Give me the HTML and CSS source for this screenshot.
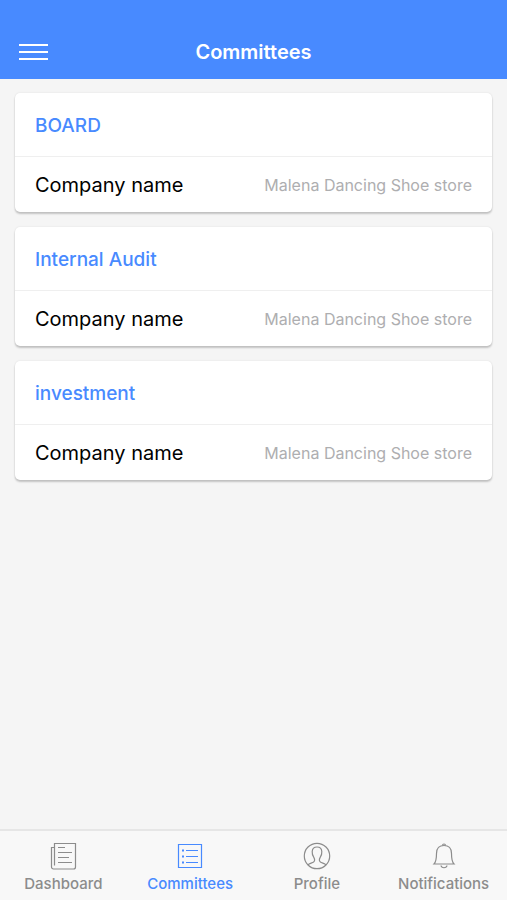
FILE: index.html
```html
<!DOCTYPE html>
<html lang="en">
<head>
    <meta charset="utf-8">
    <meta name="viewport" content="width=device-width, initial-scale=1">
    <title>Committees</title>
    <link rel="stylesheet" href="styles.css">
</head>
<body>
    <header class="toolbar">
        <button class="menu-button" type="button" aria-label="Menu">
            <span></span>
            <span></span>
            <span></span>
        </button>
        <h1>Committees</h1>
    </header>

    <main class="content">
        <section class="card">
            <h2>BOARD</h2>
            <div class="item">
                <span class="label">Company name</span>
                <span class="note">Malena Dancing Shoe store</span>
            </div>
        </section>
        <section class="card">
            <h2>Internal Audit</h2>
            <div class="item">
                <span class="label">Company name</span>
                <span class="note">Malena Dancing Shoe store</span>
            </div>
        </section>
        <section class="card">
            <h2>investment</h2>
            <div class="item">
                <span class="label">Company name</span>
                <span class="note">Malena Dancing Shoe store</span>
            </div>
        </section>
    </main>

    <nav class="tabs">
        <a class="tab" href="#dashboard">
            <svg viewBox="0 0 28 28" stroke-width="1.2" aria-hidden="true">
                <path d="M5.500 23.500V1.500h21v23.500a2 2 0 0 1-2 2h-20a2 2 0 0 1-2-2V5.500h3"/>
                <path d="M9 5.500h7M9 10.500h14M9 15.500h11M9 20.500h14"/>
            </svg>
            <span>Dashboard</span>
        </a>
        <a class="tab active" href="#committees">
            <svg viewBox="0 0 28 28" stroke-width="1.2" aria-hidden="true">
                <path d="M2.500 2.500h23v23h-23zM10 8.500h12M10 14.500h12M10 20.500h12"/>
                <path class="dots" d="M6 7.500h2v2h-2zM6 13.500h2v2h-2zM6 19.500h2v2h-2z"/>
            </svg>
            <span>Committees</span>
        </a>
        <a class="tab" href="#profile">
            <svg viewBox="0 0 28 28" stroke-width="1.2" aria-hidden="true">
                <circle cx="14" cy="14" r="12.700"/>
                <path d="M5 22.800c1.500-1.800 6-1.800 6.500-4 .4-1.500 0-2.500-.8-3.700C9.500 13.300 9 12 9.200 9.500 9.400 6.500 11 5 14 5s4.600 1.500 4.800 4.500c.2 2.500-.3 3.800-1.500 5.600-.8 1.200-1.200 2.200-.8 3.700.5 2.200 5 2.200 6.500 4"/>
            </svg>
            <span>Profile</span>
        </a>
        <a class="tab" href="#notifications">
            <svg viewBox="0 0 28 28" stroke-width="1.200" aria-hidden="true">
                <path d="M4 22c2-2 2.500-4 2.500-10.500C6.500 6 9.500 3.500 14 3.500s7.500 2.500 7.500 8c0 6.500.5 8.500 2.500 10.500z"/>
                <path d="M12.500 3.500c0-2 3-2 3 0M11 23.500c.5 3 5.500 3 6 0"/>
            </svg>
            <span>Notifications</span>
        </a>
    </nav>
</body>
</html>
```
FILE: styles.css
```css
* {
    box-sizing: border-box;
}
body {
    font-family: Inter, "Liberation Sans", sans-serif;
    margin: 0;
    min-height: 100vh;
    display: flex;
    flex-direction: column;
    background-color: #f5f5f5;
}
.toolbar {
    display: grid;
    grid-template-columns: 48px 1fr 48px;
    align-items: center;
    padding: 25px 9px 0;
    height: 79px;
    background-color: #488aff;
    color: #fff;
}
.toolbar h1 {
    margin: 0;
    font-size: 20px;
    line-height: 28px;
    font-weight: 600;
    text-align: center;
}
.menu-button {
    display: flex;
    flex-direction: column;
    align-items: center;
    gap: 5px;
    padding: 8px 0;
    border: none;
    background: none;
    cursor: pointer;
}
.menu-button span {
    width: 29px;
    height: 2px;
    background-color: #fff;
}
.content {
    flex: 1;
    display: flex;
    flex-direction: column;
    gap: 15px;
    padding: 14px 15px;
}
.card {
    background-color: #fff;
    border-radius: 5px;
    box-shadow: 0 2px 2px rgba(0, 0, 0, 0.2), 0 0 2px rgba(0, 0, 0, 0.1);
}
.card h2 {
    margin: 0;
    padding: 19px 20px 16px;
    border-bottom: 1px solid #efefef;
    color: #488aff;
    font-size: 19px;
    line-height: 28px;
    font-weight: 500;
}
.item {
    display: flex;
    align-items: center;
    justify-content: space-between;
    padding: 14px 20px 13px;
    line-height: 28px;
}
.label {
    color: #000;
    font-size: 20px;
}
.note {
    color: #aeaeb0;
    font-size: 16px;
}
.tabs {
    display: grid;
    grid-template-columns: repeat(4, 1fr);
    border-top: 2px solid #e6e6e6;
    background-color: #f8f8f8;
}
.tab {
    display: flex;
    flex-direction: column;
    align-items: center;
    gap: 4px;
    padding: 11px 0 6px;
    color: #8c8c8c;
    font-size: 15px;
    line-height: 20px;
    font-weight: 500;
    text-decoration: none;
}
.tab.active {
    color: #488aff;
}
.tab svg {
    width: 28px;
    height: 28px;
    fill: none;
    stroke: currentColor;
}
.tab .dots {
    fill: currentColor;
    stroke: none;
}
```
